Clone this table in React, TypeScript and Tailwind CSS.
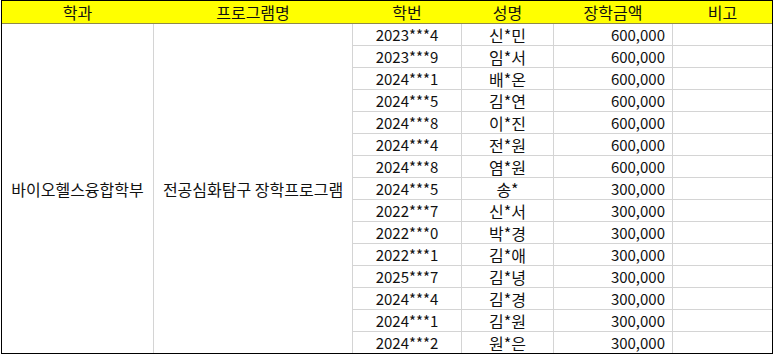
const rows: [string, string, string][] = [
  ["2023***4", "신*민", "600,000"],
  ["2023***9", "임*서", "600,000"],
  ["2024***1", "배*온", "600,000"],
  ["2024***5", "김*연", "600,000"],
  ["2024***8", "이*진", "600,000"],
  ["2024***4", "전*원", "600,000"],
  ["2024***8", "염*원", "600,000"],
  ["2024***5", "송*", "300,000"],
  ["2022***7", "신*서", "300,000"],
  ["2022***0", "박*경", "300,000"],
  ["2022***1", "김*애", "300,000"],
  ["2025***7", "김*녕", "300,000"],
  ["2024***4", "김*경", "300,000"],
  ["2024***1", "김*원", "300,000"],
  ["2024***2", "원*은", "300,000"],
];

const headers = ["학과", "프로그램명", "학번", "성명", "장학금액", "비고"];
const cols = "grid-cols-[151px_198px_108px_91px_118px_99px]";

export default function App() {
  return (
    <div className="h-[354px] w-[776px] bg-white font-['Noto_Sans_CJK_KR','Noto_Sans',sans-serif] text-[15px] leading-none text-[#111]">
      <div className="ml-[1px] w-[772px] border border-black">
        <div className={`grid ${cols} gap-x-px h-[23px] border-b border-[#8f8a4c] bg-[#ffff00] text-[16px]`}>
          {headers.map((h) => (
            <div key={h} className="flex items-center justify-center">
              {h}
            </div>
          ))}
        </div>
        <div className={`grid ${cols} grid-rows-[repeat(15,21px)] gap-px bg-[#d4d4d4]`}>
          <div className="row-span-15 flex items-center justify-center bg-white text-[16px]">바이오헬스융합학부</div>
          <div className="row-span-15 flex items-center justify-center bg-white text-[16px]">전공심화탐구 장학프로그램</div>
          {rows.map(([id, name, amount], i) => (
            <div key={i} className="contents">
              <div className="flex items-center justify-center bg-white">{id}</div>
              <div className="flex items-center justify-center bg-white text-[16px]">{name}</div>
              <div className="flex items-center justify-end bg-white pr-[7px]">{amount}</div>
              <div className="bg-white" />
            </div>
          ))}
        </div>
      </div>
    </div>
  );
}
